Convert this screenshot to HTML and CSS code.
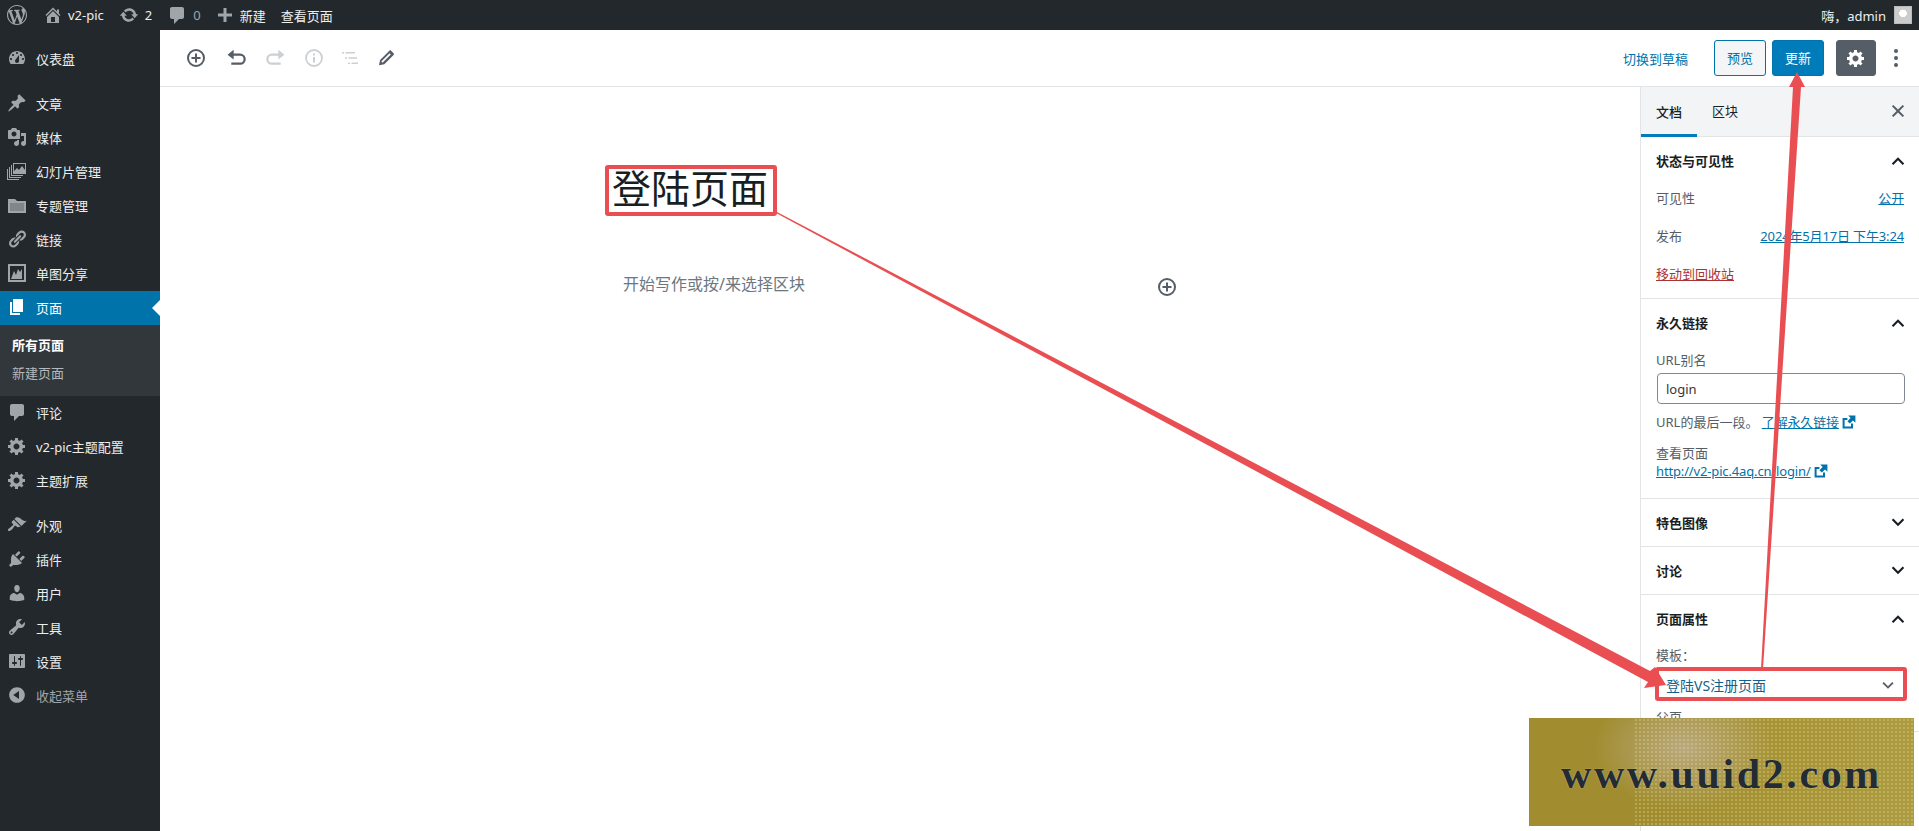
FILE: index.html
```html
<!DOCTYPE html>
<html>

<head>
    <title>编辑页面</title>
    <link rel="stylesheet" href="styles.css">
</head>

<body>
    <!-- shared icons -->
    <svg class="sprite" xmlns="http://www.w3.org/2000/svg">
        <symbol id="i-wp" viewBox="0 0 20 20"><path fill-rule="evenodd" d="M20 10c0-5.51-4.49-10-10-10C4.48 0 0 4.49 0 10c0 5.52 4.48 10 10 10 5.51 0 10-4.48 10-10zM7.78 15.37L4.37 6.22c.55-.02 1.17-.08 1.17-.08.5-.06.44-1.13-.06-1.11 0 0-1.45.11-2.37.11-.18 0-.37 0-.58-.01C4.12 2.69 6.87 1.11 10 1.11c2.33 0 4.45.87 6.05 2.34-.68-.11-1.65.39-1.65 1.58 0 .74.45 1.36.9 2.1.35.61.55 1.36.55 2.46 0 1.49-1.4 5-1.4 5l-3.03-8.37c.54-.02.82-.17.82-.17.5-.05.44-1.25-.06-1.22 0 0-1.44.12-2.38.12-.87 0-2.33-.12-2.33-.12-.5-.03-.56 1.2-.06 1.22l.92.08 1.26 3.41zM17.41 10c.24-.64.74-1.87.43-4.25.7 1.29 1.05 2.71 1.05 4.25 0 3.29-1.73 6.24-4.4 7.78.97-2.59 1.94-5.2 2.92-7.78zM6.1 18.09C3.12 16.65 1.11 13.53 1.11 10c0-1.3.23-2.48.72-3.59C3.25 10.3 4.67 14.2 6.1 18.09zm4.03-6.63l2.58 6.98c-.86.29-1.76.45-2.71.45-.79 0-1.57-.11-2.29-.33.81-2.38 1.62-4.74 2.42-7.1z"/></symbol>
        <symbol id="i-home" viewBox="0 0 20 20"><path fill-rule="evenodd" d="M16 8.5l1.53 1.53-1.06 1.06L10 4.62l-6.47 6.47-1.06-1.06L10 2.5l4 4v-2h2v4zm-6-2.46l6 5.99V18H4v-5.97zM12 17v-5H8v5h4z"/></symbol>
        <symbol id="i-update" viewBox="0 0 20 20"><path d="M10.2 3.28c3.53 0 6.43 2.61 6.92 6h2.08l-3.5 4-3.5-4h2.32c-.45-1.97-2.21-3.45-4.32-3.45-1.45 0-2.73.71-3.54 1.78L4.95 5.66C6.23 4.2 8.11 3.28 10.2 3.28zm-.4 13.44c-3.52 0-6.43-2.61-6.92-6H.8l3.5-4c1.17 1.33 2.33 2.67 3.5 4H5.48c.45 1.97 2.21 3.45 4.32 3.45 1.45 0 2.73-.71 3.54-1.78l1.71 1.95c-1.28 1.46-3.15 2.38-5.25 2.38z"/></symbol>
        <symbol id="i-comment" viewBox="0 0 20 20"><path d="M5 2h10c1.1 0 2 .9 2 2v8c0 1.1-.9 2-2 2h-3l-5 5v-5H5c-1.1 0-2-.9-2-2V4c0-1.1.9-2 2-2z"/></symbol>
        <symbol id="i-plus" viewBox="0 0 20 20"><path d="M17 8.5v3h-5.5V17h-3v-5.5H3v-3h5.500V3h3v5.500z"/></symbol>
        <symbol id="i-dashboard" viewBox="0 0 20 20"><path fill-rule="evenodd" d="M3.76 16h12.48c1.1-1.37 1.76-3.11 1.76-5 0-4.42-3.58-8-8-8s-8 3.58-8 8c0 1.89.66 3.63 1.76 5zM10 4c.55 0 1 .45 1 1s-.45 1-1 1-1-.45-1-1 .45-1 1-1zM6 6c.55 0 1 .45 1 1s-.45 1-1 1-1-.45-1-1 .45-1 1-1zm8 0c.55 0 1 .45 1 1s-.45 1-1 1-1-.45-1-1 .45-1 1-1zm-5.370 5.550L12 7v6c0 1.100-.9 2-2 2s-2-.9-2-2c0-.57.24-1.080.63-1.450zM4 10c.55 0 1 .45 1 1s-.45 1-1 1-1-.45-1-1 .45-1 1-1zm12 0c.55 0 1 .45 1 1s-.45 1-1 1-1-.45-1-1 .45-1 1-1z"/></symbol>
        <symbol id="i-pin" viewBox="0 0 20 20"><path d="M10.44 3.02l1.82-1.82 6.36 6.35-1.83 1.82c-1.05-.68-2.48-.57-3.41.36l-.75.75c-.92.93-1.04 2.35-.35 3.41l-1.83 1.82-2.41-2.41-2.8 2.79c-.42.42-3.38 2.71-3.8 2.29s1.86-3.39 2.28-3.81l2.79-2.79L4.1 9.36l1.83-1.82c1.05.69 2.48.57 3.4-.36l.75-.75c.93-.92 1.05-2.35.36-3.41z"/></symbol>
        <symbol id="i-media" viewBox="0 0 20 20"><path fill-rule="evenodd" d="M13 11V4c0-.55-.45-1-1-1h-1.670L9 1H5L3.670 3H2c-.55 0-1 .45-1 1v7c0 .55.45 1 1 1h10c.55 0 1-.45 1-1zM7 4.500c1.380 0 2.500 1.120 2.500 2.500S8.380 9.500 7 9.500 4.500 8.380 4.500 7 5.620 4.500 7 4.500zM14 6h5v10.500c0 1.380-1.120 2.500-2.500 2.500S14 17.880 14 16.500s1.120-2.500 2.500-2.500c.17 0 .34.02.5.05V9h-3V6zm-4 8.050V13h2v3.500c0 1.380-1.120 2.500-2.500 2.500S7 17.880 7 16.500 8.120 14 9.500 14c.17 0 .34.02.5.05z"/></symbol>
        <symbol id="i-slides" viewBox="0 0 20 20"><path fill-rule="evenodd" d="M6 2h13v11H6zm1 1v7l3-3 2 2 3-4 3 4V3zM4 4h1v10h11v1H4zM2 6h1v10h11v1H2zM0 8h1v10h11v1H0z"/></symbol>
        <symbol id="i-folder" viewBox="0 0 20 20"><path fill-rule="evenodd" d="M1 4h7l2 2h9v12H1zm2 4v8h14V8z"/><path opacity=".75" d="M3 8h14v8H3z"/></symbol>
        <symbol id="i-links" viewBox="0 0 20 20"><path d="M17.740 2.760c1.680 1.690 1.680 4.410 0 6.100l-1.530 1.520c-1.120 1.120-2.700 1.470-4.140 1.090l2.620-2.610.76-.77.76-.76c.84-.84.84-2.200 0-3.040-.84-.85-2.200-.85-3.040 0l-.77.76-3.380 3.380c-.37-1.440-.02-3.020 1.100-4.140l1.520-1.530c1.690-1.680 4.420-1.680 6.100 0zM8.590 13.430l5.340-5.340c.42-.42.42-1.100 0-1.520-.44-.43-1.130-.39-1.530 0l-5.330 5.340c-.42.42-.42 1.100 0 1.520.44.43 1.130.39 1.520 0zm-.76 2.290l4.140-4.150c.38 1.440.03 3.020-1.090 4.140l-1.520 1.530c-1.690 1.680-4.410 1.680-6.100 0-1.680-1.680-1.680-4.420 0-6.100l1.530-1.520c1.120-1.120 2.700-1.470 4.140-1.100l-4.140 4.150c-.85.84-.85 2.200 0 3.050.84.84 2.200.84 3.040 0z"/></symbol>
        <symbol id="i-chart" viewBox="0 0 20 20"><path fill-rule="evenodd" d="M1 1h18v18H1zm2 2v14h14V3zm1 13l3-8 2 4 2-6 2 3 2-3v10z"/></symbol>
        <symbol id="i-page" viewBox="0 0 20 20"><path d="M6 15V2h10v13H6zm-1 1h8v2H3V5h2v11z"/></symbol>
        <symbol id="i-gear" viewBox="0 0 20 20"><path fill-rule="evenodd" d="M18 12h-2.180c-.17.7-.44 1.350-.81 1.930l1.540 1.540-2.100 2.100-1.540-1.540c-.58.36-1.230.63-1.910.79V19H8v-2.180c-.68-.16-1.330-.43-1.910-.79l-1.540 1.540-2.120-2.120 1.540-1.540c-.36-.58-.63-1.230-.79-1.910H1V9.030h2.170c.16-.7.44-1.350.8-1.940L2.430 5.550l2.100-2.100 1.540 1.540c.58-.37 1.240-.64 1.930-.81V2h3v2.180c.68.16 1.330.43 1.910.79l1.540-1.540 2.120 2.120-1.540 1.540c.36.59.64 1.240.8 1.940H18V12zm-8.500 1.500c1.660 0 3-1.340 3-3s-1.340-3-3-3-3 1.340-3 3 1.340 3 3 3z"/></symbol>
        <symbol id="i-brush" viewBox="0 0 20 20"><path d="M14.480 11.060L7.410 3.990l1.500-1.500c.5-.56 2.300-.47 3.510.32 1.210.8 1.430 1.280 2.910 2.100 1.180.64 2.450 1.260 4.450.85zm-.71.71L6.700 4.700 4.930 6.470c-.39.39-.39 1.020 0 1.410l1.060 1.060c.39.39.39 1.030 0 1.420-.6.6-1.430 1.110-2.210 1.690-.35.26-.7.53-1.010.84C1.430 13.230.4 14.980 1.200 15.800c.8.81 2.550-.22 3.910-1.570.31-.31.58-.66.85-1.020.57-.78 1.080-1.610 1.690-2.210.39-.39 1.020-.39 1.410 0l1.060 1.060c.39.39 1.020.39 1.410 0z"/></symbol>
        <symbol id="i-plugin" viewBox="0 0 20 20"><path d="M13.110 4.360L9.870 7.600 8 5.730l3.240-3.240c.35-.34 1.050-.2 1.560.32.52.51.66 1.210.31 1.550zm-8 1.770l.91-1.120 9.010 9.010-1.190.84c-.71.71-2.630 1.160-3.820 1.160H6.140L4.900 17.260c-.59.59-1.540.59-2.120 0-.59-.58-.59-1.530 0-2.120l1.240-1.240v-3.880c0-1.130.4-3.190 1.090-3.890zm7.260 3.970l3.240-3.240c.34-.35 1.040-.21 1.550.31.52.51.66 1.210.31 1.550l-3.240 3.250z"/></symbol>
        <symbol id="i-user" viewBox="0 0 20 20"><path d="M10 9.250c-2.270 0-2.730-3.440-2.730-3.440C7 4.020 7.820 2 9.970 2c2.160 0 2.980 2.020 2.710 3.810 0 0-.41 3.440-2.680 3.440zm0 2.570L12.720 10c2.390 0 4.520 2.330 4.520 4.530v2.490s-3.650 1.130-7.240 1.130c-3.650 0-7.240-1.130-7.240-1.130v-2.490c0-2.250 1.940-4.480 4.470-4.480z"/></symbol>
        <symbol id="i-tool" viewBox="0 0 20 20"><path fill-rule="evenodd" d="M16.680 9.770c-1.340 1.340-3.300 1.670-4.950.99l-5.410 6.520c-.99.99-2.590.99-3.580 0s-.99-2.590 0-3.570l6.520-5.420c-.68-1.650-.35-3.610.99-4.950 1.280-1.280 3.120-1.620 4.720-1.060l-2.890 2.890 2.820 2.820 2.860-2.870c.53 1.580.18 3.390-1.080 4.650zM3.810 16.210c.4.39 1.040.39 1.430 0 .4-.4.4-1.040 0-1.430-.39-.4-1.030-.4-1.430 0-.39.39-.39 1.030 0 1.430z"/></symbol>
        <symbol id="i-settings" viewBox="0 0 20 20"><path fill-rule="evenodd" d="M18 16V4c0-.55-.45-1-1-1H3c-.55 0-1 .45-1 1v12c0 .55.45 1 1 1h14c.55 0 1-.45 1-1zM8 11h1c.55 0 1 .45 1 1s-.45 1-1 1H8v1.500c0 .28-.22.5-.5.5s-.5-.22-.5-.5V13H6c-.55 0-1-.45-1-1s.45-1 1-1h1V5.500c0-.28.22-.5.5-.5s.5.22.5.5V11zm5-2h-1c-.55 0-1-.45-1-1s.45-1 1-1h1V5.500c0-.28.22-.5.5-.5s.5.22.5.5V7h1c.55 0 1 .45 1 1s-.45 1-1 1h-1v5.500c0 .28-.22.5-.5.5s-.5-.22-.5-.5V9z"/></symbol>
        <symbol id="i-collapse" viewBox="0 0 20 20"><path fill-rule="evenodd" d="M10 2.160c4.330 0 7.840 3.510 7.840 7.840s-3.510 7.840-7.840 7.840S2.160 14.330 2.160 10 5.710 2.160 10 2.160zm2 11.720V6.120L6.180 9.970z"/></symbol>
        <symbol id="i-inserter" viewBox="0 0 20 20"><circle cx="10" cy="10" r="8" fill="none" stroke="currentColor" stroke-width="2"/><path d="M9 5.500h2V9h3.500v2H11v3.500H9V11H5.500V9H9z"/></symbol>
        <symbol id="i-undo" viewBox="1.500 1.500 17 17"><path d="M8 3v3.200h5.500a4.800 4.800 0 0 1 0 9.600H6v-1.900h7.500a2.900 2.900 0 0 0 0-5.800H8V11.300L2.800 7.200z"/></symbol>
        <symbol id="i-redo" viewBox="1.500 1.500 17 17"><path d="M12 3v3.200H6.500a4.800 4.800 0 0 0 0 9.600H14v-1.900H6.500a2.900 2.900 0 0 1 0-5.800H12V11.300l5.200-4.100z"/></symbol>
        <symbol id="i-info" viewBox="0 0 20 20"><circle cx="10" cy="10" r="8" fill="none" stroke="currentColor" stroke-width="1.800"/><path d="M9 9h2v5.500H9zM9 5.500h2v2H9z"/></symbol>
        <symbol id="i-list" viewBox="0 0 20 20"><path d="M2 4h2v1.500H2zM5.500 4H15v1.500H5.500zM5 9.200h2v1.500H5zM8.500 9.200H17v1.500H8.500zM8 14.500h2V16H8zM11.500 14.500H18V16h-6.500z"/></symbol>
        <symbol id="i-edit" viewBox="0 0 20 20"><path fill-rule="evenodd" d="M14.800 2.400l2.800 2.800c.5.5.5 1.300 0 1.700l-9.300 9.300-5.300 1.100 1.100-5.300 9.300-9.300c.5-.5 1.300-.5 1.700 0zM13.600 5.200l-8.300 8.300 1.200 1.200 8.300-8.300z"/></symbol>
        <symbol id="i-up" viewBox="0 0 20 20"><path d="M3.800 13.400L10 7.200l6.200 6.200-1.500 1.500L10 10.200l-4.700 4.700z"/></symbol>
        <symbol id="i-down" viewBox="0 0 20 20"><path d="M3.800 8.100L10 14.300l6.200-6.200-1.500-1.500L10 11.300 5.300 6.600z"/></symbol>
        <symbol id="i-close" viewBox="0 0 20 20"><path d="M5.300 3.900L10 8.600l4.700-4.700 1.400 1.400L11.400 10l4.700 4.700-1.400 1.400-4.700-4.700-4.700 4.700-1.400-1.400L8.600 10 3.900 5.300z"/></symbol>
        <symbol id="i-external" viewBox="0 0 20 20"><path d="M9 2h9v9l-3-3-4 4-3-3 4-4zM2 5h6v2.500H4.500v8h8V12H15v6H2z"/></symbol>
    </svg>

    <div class="topbar">
        <div class="top-left">
            <svg class="top-logo"><use href="#i-wp"/></svg>
            <span class="top-item"><svg class="top-icon"><use href="#i-home"/></svg>v2-pic</span>
            <span class="top-item"><svg class="top-icon top-update"><use href="#i-update"/></svg>2</span>
            <span class="top-item top-dim"><svg class="top-icon top-comment"><use href="#i-comment"/></svg>0</span>
            <span class="top-item"><svg class="top-icon"><use href="#i-plus"/></svg>新建</span>
            <span class="top-item">查看页面</span>
        </div>
        <div class="top-right">
            <span>嗨，admin</span>
            <div class="avatar"></div>
        </div>
    </div>

    <div class="layout">
        <div class="menu">
            <a class="menu-item menu-gap"><svg><use href="#i-dashboard"/></svg>仪表盘</a>
            <a class="menu-item"><svg><use href="#i-pin"/></svg>文章</a>
            <a class="menu-item"><svg><use href="#i-media"/></svg>媒体</a>
            <a class="menu-item"><svg><use href="#i-slides"/></svg>幻灯片管理</a>
            <a class="menu-item"><svg><use href="#i-folder"/></svg>专题管理</a>
            <a class="menu-item"><svg><use href="#i-links"/></svg>链接</a>
            <a class="menu-item"><svg><use href="#i-chart"/></svg>单图分享</a>
            <a class="menu-item active"><svg><use href="#i-page"/></svg>页面</a>
            <div class="submenu">
                <a class="sub-item current">所有页面</a>
                <a class="sub-item">新建页面</a>
            </div>
            <a class="menu-item"><svg><use href="#i-comment"/></svg>评论</a>
            <a class="menu-item"><svg><use href="#i-gear"/></svg>v2-pic主题配置</a>
            <a class="menu-item menu-gap"><svg><use href="#i-gear"/></svg>主题扩展</a>
            <a class="menu-item"><svg><use href="#i-brush"/></svg>外观</a>
            <a class="menu-item"><svg><use href="#i-plugin"/></svg>插件</a>
            <a class="menu-item"><svg><use href="#i-user"/></svg>用户</a>
            <a class="menu-item"><svg><use href="#i-tool"/></svg>工具</a>
            <a class="menu-item"><svg><use href="#i-settings"/></svg>设置</a>
            <a class="menu-item menu-collapse"><svg><use href="#i-collapse"/></svg>收起菜单</a>
        </div>

        <div class="workspace">
            <div class="toolbar">
                <div class="tools">
                    <svg class="tool tool-dark"><use href="#i-inserter"/></svg>
                    <svg class="tool tool-dark"><use href="#i-undo"/></svg>
                    <svg class="tool tool-off"><use href="#i-redo"/></svg>
                    <svg class="tool tool-off tool-narrow"><use href="#i-info"/></svg>
                    <svg class="tool tool-off tool-narrow"><use href="#i-list"/></svg>
                    <svg class="tool tool-dark tool-narrow"><use href="#i-edit"/></svg>
                </div>
                <div class="actions">
                    <a class="draft-link">切换到草稿</a>
                    <button class="btn btn-preview">预览</button>
                    <button class="btn btn-update">更新</button>
                    <button class="btn btn-gear"><svg><use href="#i-gear"/></svg></button>
                    <div class="dots"><span></span><span></span><span></span></div>
                </div>
            </div>

            <div class="columns">
                <div class="editor">
                    <div class="editor-col">
                        <div class="post-title">登陆页面</div>
                        <div class="placeholder-row">
                            <span>开始写作或按/来选择区块</span>
                            <svg class="inline-add"><use href="#i-inserter"/></svg>
                        </div>
                    </div>
                </div>

                <div class="sidebar">
                    <div class="tabs">
                        <div class="tab tab-on">文档</div>
                        <div class="tab">区块</div>
                        <svg class="tabs-close"><use href="#i-close"/></svg>
                    </div>

                    <div class="panel">
                        <div class="panel-head">状态与可见性<svg><use href="#i-up"/></svg></div>
                        <div class="row"><span class="muted">可见性</span><a class="link">公开</a></div>
                        <div class="row"><span class="muted">发布</span><a class="link">2024年5月17日 下午3:24</a></div>
                        <div class="row"><a class="trash">移动到回收站</a></div>
                    </div>

                    <div class="panel">
                        <div class="panel-head">永久链接<svg><use href="#i-up"/></svg></div>
                        <div class="permalink">
                            <div class="muted">URL别名</div>
                            <div class="text-input">login</div>
                            <div class="muted hint">URL的最后一段。 <a class="link">了解永久链接</a><svg class="ext"><use href="#i-external"/></svg></div>
                            <div class="muted view-label">查看页面</div>
                            <div class="view-link"><a class="link">http://v2-pic.4aq.cn/login/</a><svg class="ext"><use href="#i-external"/></svg></div>
                        </div>
                    </div>

                    <div class="panel">
                        <div class="panel-head">特色图像<svg><use href="#i-down"/></svg></div>
                    </div>

                    <div class="panel">
                        <div class="panel-head">讨论<svg><use href="#i-down"/></svg></div>
                    </div>

                    <div class="panel">
                        <div class="panel-head">页面属性<svg><use href="#i-up"/></svg></div>
                        <div class="attrs">
                            <div class="muted">模板：</div>
                            <div class="select">登陆VS注册页面<svg><use href="#i-down"/></svg></div>
                            <div class="muted parent-label">父页</div>
                        </div>
                    </div>
                </div>
            </div>
        </div>
    </div>

    <!-- red marks drawn on top of the screenshot -->
    <svg class="marks" viewBox="0 0 1919 831">
        <rect x="607" y="167" width="168" height="47" rx="1" fill="none" stroke="#e94f52" stroke-width="4"/>
        <rect x="1657" y="669" width="248" height="30" rx="1" fill="none" stroke="#e94f52" stroke-width="4"/>
        <path fill="#e94f52" d="M777 212L1650 671 1655 667 1666 685 1644 688 1648 682 776 213z"/>
        <path fill="#e94f52" d="M1761 669L1793 87 1789 87 1797 72 1805 87 1801 87 1763 669z"/>
    </svg>

    <div class="watermark"><span>www.uuid2.com</span></div>
</body>

</html>
```

FILE: styles.css
```css
* {
    margin: 0;
    padding: 0;
    box-sizing: border-box;
}

html,
body {
    height: 100%;
    overflow: hidden;
}

body {
    position: relative;
    background: #fff;
    font-family: "Noto Sans", "Noto Sans CJK SC", sans-serif;
    font-size: 13px;
    color: #191e23;
}

.sprite {
    display: none;
}

svg {
    fill: currentColor;
}

/* top admin bar */
.topbar {
    height: 30px;
    background: #23282d;
    color: #eee;
    display: flex;
    justify-content: space-between;
    align-items: center;
    padding: 0 7px 0 7px;
}

.top-left,
.top-right,
.top-item {
    display: flex;
    align-items: center;
}

.top-logo {
    width: 20px;
    height: 20px;
    color: #a0a5aa;
    margin-right: 16px;
}

.top-item {
    margin-right: 15px;
}

.top-icon {
    width: 20px;
    height: 20px;
    color: #a0a5aa;
    margin-right: 5px;
}

.top-update {
    margin-right: 6px;
}

.top-comment {
    margin-right: 6px;
}

.top-dim {
    color: #a0a5aa;
    margin-right: 14px;
}

.top-right {
    gap: 8px;
}

.avatar {
    width: 18px;
    height: 18px;
    background: radial-gradient(circle at 50% 40%, #fff 30%, #ccc 32%);
    border: 1px solid #bbb;
}

/* left menu */
.layout {
    display: flex;
    height: 801px;
}

.menu {
    width: 160px;
    flex-shrink: 0;
    background: #23282d;
    padding-top: 12px;
}

.menu-item {
    display: flex;
    align-items: center;
    height: 34px;
    padding-bottom: 2px;
    color: #eee;
    position: relative;
}

.menu-item svg {
    width: 20px;
    height: 20px;
    margin: 0 9px 0 7px;
    color: #a0a5aa;
}

.menu-gap {
    margin-bottom: 11px;
}

.menu-item.active {
    background: #0073aa;
    color: #fff;
}

.menu-item.active svg {
    color: #fff;
}

.menu-item.active::after {
    content: "";
    position: absolute;
    right: 0;
    top: 9px;
    border: 8px solid transparent;
    border-right-color: #fff;
    border-left-width: 0;
}

.submenu {
    background: #32373c;
    height: 71px;
    padding-top: 6px;
}

.sub-item {
    display: block;
    height: 28px;
    line-height: 28px;
    padding-left: 12px;
    color: #b4b9be;
}

.sub-item.current {
    color: #fff;
    font-weight: 700;
}

.menu-collapse {
    color: #a0a5aa;
}

/* editor */
.workspace {
    flex: 1;
    display: flex;
    flex-direction: column;
    min-width: 0;
}

.toolbar {
    height: 57px;
    border-bottom: 1px solid #e2e4e7;
    display: flex;
    justify-content: space-between;
    align-items: center;
    padding: 0 3px 0 16px;
}

.tools,
.actions {
    display: flex;
    align-items: center;
}

.tool {
    width: 40px;
    height: 20px;
}

.tool-narrow {
    width: 36px;
}

.tool-dark {
    color: #555d66;
}

.tool-off {
    color: #ccd0d4;
}

.draft-link {
    color: #0073aa;
    margin-right: 26px;
}

.btn {
    width: 52px;
    height: 36px;
    padding-bottom: 2px;
    border-radius: 3px;
    font-family: inherit;
    font-size: 13px;
    border: 1px solid #0073aa;
    cursor: pointer;
}

.btn-preview {
    background: #f3f5f6;
    color: #0071a1;
    margin-right: 6px;
}

.btn-update {
    background: #007cba;
    color: #fff;
    margin-right: 12px;
}

.btn-gear {
    width: 40px;
    padding-bottom: 0;
    background: #555d66;
    border-color: #555d66;
    color: #fff;
    display: flex;
    align-items: center;
    justify-content: center;
}

.btn-gear svg {
    width: 20px;
    height: 20px;
}

.dots {
    width: 40px;
    display: flex;
    flex-direction: column;
    align-items: center;
    gap: 3px;
}

.dots span {
    width: 4px;
    height: 4px;
    border-radius: 50%;
    background: #555d66;
}

.columns {
    flex: 1;
    display: flex;
    min-height: 0;
}

.editor {
    flex: 1;
    display: flex;
    justify-content: center;
    padding-top: 78px;
}

.editor-col {
    width: 580px;
}

.post-title {
    font-family: "Liberation Serif", "Noto Sans CJK SC", serif;
    font-size: 39px;
    line-height: 50px;
    padding-left: 2px;
    color: #191e23;
}

.placeholder-row {
    display: flex;
    justify-content: space-between;
    align-items: center;
    height: 24px;
    margin-top: 56px;
    padding: 0 13px;
    font-size: 16px;
    color: #6c7781;
}

.inline-add {
    width: 20px;
    height: 20px;
    color: #555d66;
    margin-top: 8px;
}

/* settings sidebar */
.sidebar {
    width: 279px;
    flex-shrink: 0;
    border-left: 1px solid #e2e4e7;
    overflow: hidden;
}

.tabs {
    height: 50px;
    background: #f3f4f5;
    border-bottom: 1px solid #e2e4e7;
    display: flex;
    align-items: stretch;
    position: relative;
}

.tab {
    width: 56px;
    padding-bottom: 2px;
    display: flex;
    align-items: center;
    justify-content: center;
    color: #191e23;
    margin-left: 0;
}

.tab-on {
    font-weight: 500;
    border-bottom: 3px solid #007cba;
    height: 50px;
    padding: 1px 0 0;
}

.tab + .tab {
    width: 64px;
    margin-left: -4px;
}

.tabs-close {
    position: absolute;
    right: 11px;
    top: 14px;
    width: 20px;
    height: 20px;
    color: #555d66;
}

.panel {
    border-bottom: 1px solid #e2e4e7;
    padding-bottom: 5px;
}

.panel-head {
    height: 42px;
    padding: 5px 11px 1px 15px;
    display: flex;
    justify-content: space-between;
    align-items: center;
    font-weight: 700;
    color: #191e23;
}

.panel-head svg {
    width: 20px;
    height: 20px;
}

.row {
    height: 38px;
    padding: 0 15px 2px;
    display: flex;
    justify-content: space-between;
    align-items: center;
}

.muted {
    color: #555d66;
}

.link {
    color: #0073aa;
    text-decoration: underline;
    letter-spacing: -.15px;
}

.trash {
    color: #a33;
    text-decoration: underline;
}

.permalink {
    padding: 9px 15px 0;
    height: 152px;
}

.text-input {
    height: 31px;
    line-height: 31px;
    margin: 4px -1px 0 1px;
    padding: 0 8px;
    border: 1px solid #7e8993;
    border-radius: 4px;
    color: #32373c;
}

.hint {
    margin-top: 8px;
}

.ext {
    width: 16px;
    height: 16px;
    margin-left: 2px;
    vertical-align: -3px;
    color: #0073aa;
}

.view-label {
    margin-top: 13px;
    line-height: 18px;
}

.view-link {
    line-height: 18px;
}

.attrs {
    padding: 8px 15px 0;
}

.select {
    height: 27px;
    margin-top: 7px;
    padding: 0 7px 0 10px;
    display: flex;
    justify-content: space-between;
    align-items: center;
    font-size: 14px;
    color: #11618a;
}

.select svg {
    width: 18px;
    height: 18px;
    color: #555d66;
}

.parent-label {
    margin-top: 9px;
}

/* overlays */
.marks {
    position: absolute;
    left: 0;
    top: 0;
    width: 1919px;
    height: 831px;
    pointer-events: none;
}

.watermark {
    position: absolute;
    left: 1529px;
    top: 718px;
    width: 385px;
    height: 108px;
    padding: 30px 0 0 32px;
    background:
        radial-gradient(ellipse 90px 60px at 155px 30px, #b9a97f 0%, rgba(185, 169, 127, 0) 100%),
        linear-gradient(90deg, #a18d30 0, #a18d30 35%, #a89538 70%, #ad9b42 100%);
    font-family: "Liberation Serif", serif;
    font-size: 42px;
    font-weight: 700;
    line-height: 52px;
    letter-spacing: 2.6px;
    color: #232b33;
}

.watermark::before {
    content: "";
    position: absolute;
    left: 105px;
    top: 0;
    right: 0;
    bottom: 0;
    background: radial-gradient(circle, rgba(235, 225, 160, .3) 0, rgba(235, 225, 160, .3) 1px, transparent 1.200px) 0 0 / 4px 4px;
}

.watermark span {
    position: relative;
    text-shadow: 0 0 1px #d9d4b0;
}
```
